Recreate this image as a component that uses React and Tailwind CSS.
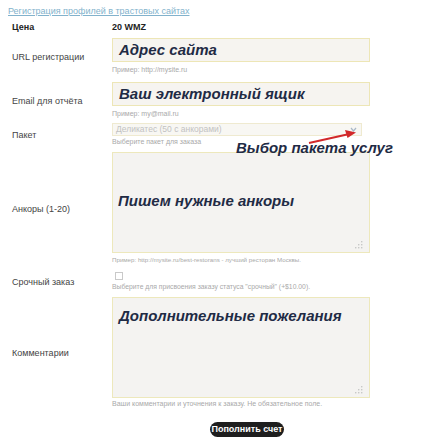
const NOTE = 'font-["Liberation_Sans",Arial,sans-serif] font-bold italic text-[15px] leading-[18px] text-[#1f2b45]'
const HINT = 'text-[7px] leading-[10px] text-[#a9a9a9]'
const LABEL = 'w-[112px] pl-[12px] shrink-0 text-[9px] leading-[12px] text-[#444]'

function Row({ label, children }) {
  return (
    <div className="flex items-center">
      <div className={LABEL}>{label}</div>
      <div className="w-[258px] flex flex-col">{children}</div>
    </div>
  )
}

function Grip() {
  return (
    <svg width="8" height="8" viewBox="0 0 8 8" className="absolute right-[6px] bottom-[3px]">
      <rect x="6" y="0" width="1.4" height="1.4" fill="#c8c8c8" />
      <rect x="3" y="3" width="1.4" height="1.4" fill="#c8c8c8" />
      <rect x="6" y="3" width="1.4" height="1.4" fill="#c8c8c8" />
      <rect x="0" y="6" width="1.4" height="1.4" fill="#c8c8c8" />
      <rect x="3" y="6" width="1.4" height="1.4" fill="#c8c8c8" />
      <rect x="6" y="6" width="1.4" height="1.4" fill="#c8c8c8" />
    </svg>
  )
}

export default function App() {
  return (
    <div className='relative w-[434px] h-[440px] bg-white overflow-hidden font-["Liberation_Sans",Arial,sans-serif]'>
      <div className="pl-[8px] pt-[4px] text-[9px] leading-[14px] text-[#82b2cc] underline">
        Регистрация профилей в трастовых сайтах
      </div>

      <div className="flex items-center mt-[3px] text-[9px] leading-[12px] font-bold text-[#222]">
        <div className="w-[112px] pl-[12px]">Цена</div>
        <div>20 WMZ</div>
      </div>

      <div className="mt-[5px] flex flex-col">
        <Row label="URL регистрации">
          <div className="h-[24px] bg-[#f6f4f0] border border-[#ede6b6] flex items-center pl-[6px]">
            <span className={NOTE}>Адрес сайта</span>
          </div>
          <div className={`${HINT} mt-[3px]`}>Пример: http://mysite.ru</div>
        </Row>

        <div className="mt-[7px]">
          <Row label="Email для отчёта">
            <div className="h-[24px] bg-[#f6f4f0] border border-[#ede6b6] flex items-center pl-[6px]">
              <span className={NOTE}>Ваш электронный ящик</span>
            </div>
            <div className={`${HINT} mt-[3px]`}>Пример: my@mail.ru</div>
          </Row>
        </div>

        <div className="mt-[4px]">
          <Row label="Пакет">
            <div className="h-[13px] w-[250px] bg-[#f8f7f3] border border-[#efead0] flex items-center justify-between pl-[3px] pr-[4px]">
              <span className="text-[8.5px] leading-[11px] text-[#c2c2c2]">Деликатес (50 с анкорами)</span>
              <svg width="7" height="5" viewBox="0 0 7 5">
                <path d="M1 1 L3.5 4 L6 1" fill="none" stroke="#a9b8c8" strokeWidth="1.2" />
              </svg>
            </div>
            <div className={`${HINT} mt-[1px]`}>Выберите пакет для заказа</div>
          </Row>
        </div>

        <div className="mt-[5px]">
          <Row label="Анкоры (1-20)">
            <div className="relative h-[101px] bg-[#f4f3f1] border border-[#ede8bc] pl-[5px] pt-[36px]">
              <span className={NOTE}>Пишем нужные анкоры</span>
              <Grip />
            </div>
            <div className="text-[6.2px] leading-[10px] text-[#a9a9a9] mt-[2px]">
              Пример: http://mysite.ru/best-restorans - лучший ресторан Москвы.
            </div>
          </Row>
        </div>

        <div className="mt-[7px]">
          <Row label="Срочный заказ">
            <div className="ml-[3px] w-[8px] h-[8px] border border-[#c9c9c9] bg-white" />
            <div className="text-[6.8px] leading-[10px] text-[#a9a9a9] mt-[2px]">
              Выберите для присвоения заказу статуса "срочный" (+$10.00).
            </div>
          </Row>
        </div>

        <div className="mt-[5px]">
          <Row label="Комментарии">
            <div className="relative h-[101px] bg-[#f4f3f1] border border-[#ede8bc] pl-[6px] pt-[6px]">
              <span className={NOTE}>Дополнительные пожелания</span>
              <Grip />
            </div>
            <div className="text-[7px] leading-[10px] text-[#a9a9a9] mt-[1px]">
              Ваши комментарии и уточнения к заказу. Не обязательное поле.
            </div>
          </Row>
        </div>

        <div className="mt-[6px] pl-[210px]">
          <button className="h-[15px] w-[74px] rounded-full bg-[#1e1e1e] text-white text-[9px] leading-[15px] font-bold">
            Пополнить счет
          </button>
        </div>
      </div>

      <div className={`absolute left-[236px] top-[139px] ${NOTE}`}>Выбор пакета услуг</div>

      <svg className="absolute left-0 top-0" width="434" height="440" viewBox="0 0 434 440">
        <line x1="309" y1="143" x2="347" y2="134.5" stroke="#d2282a" strokeWidth="2" />
        <path d="M356 132.5 L345 130 L347.5 138 Z" fill="#d2282a" />
      </svg>
    </div>
  )
}
